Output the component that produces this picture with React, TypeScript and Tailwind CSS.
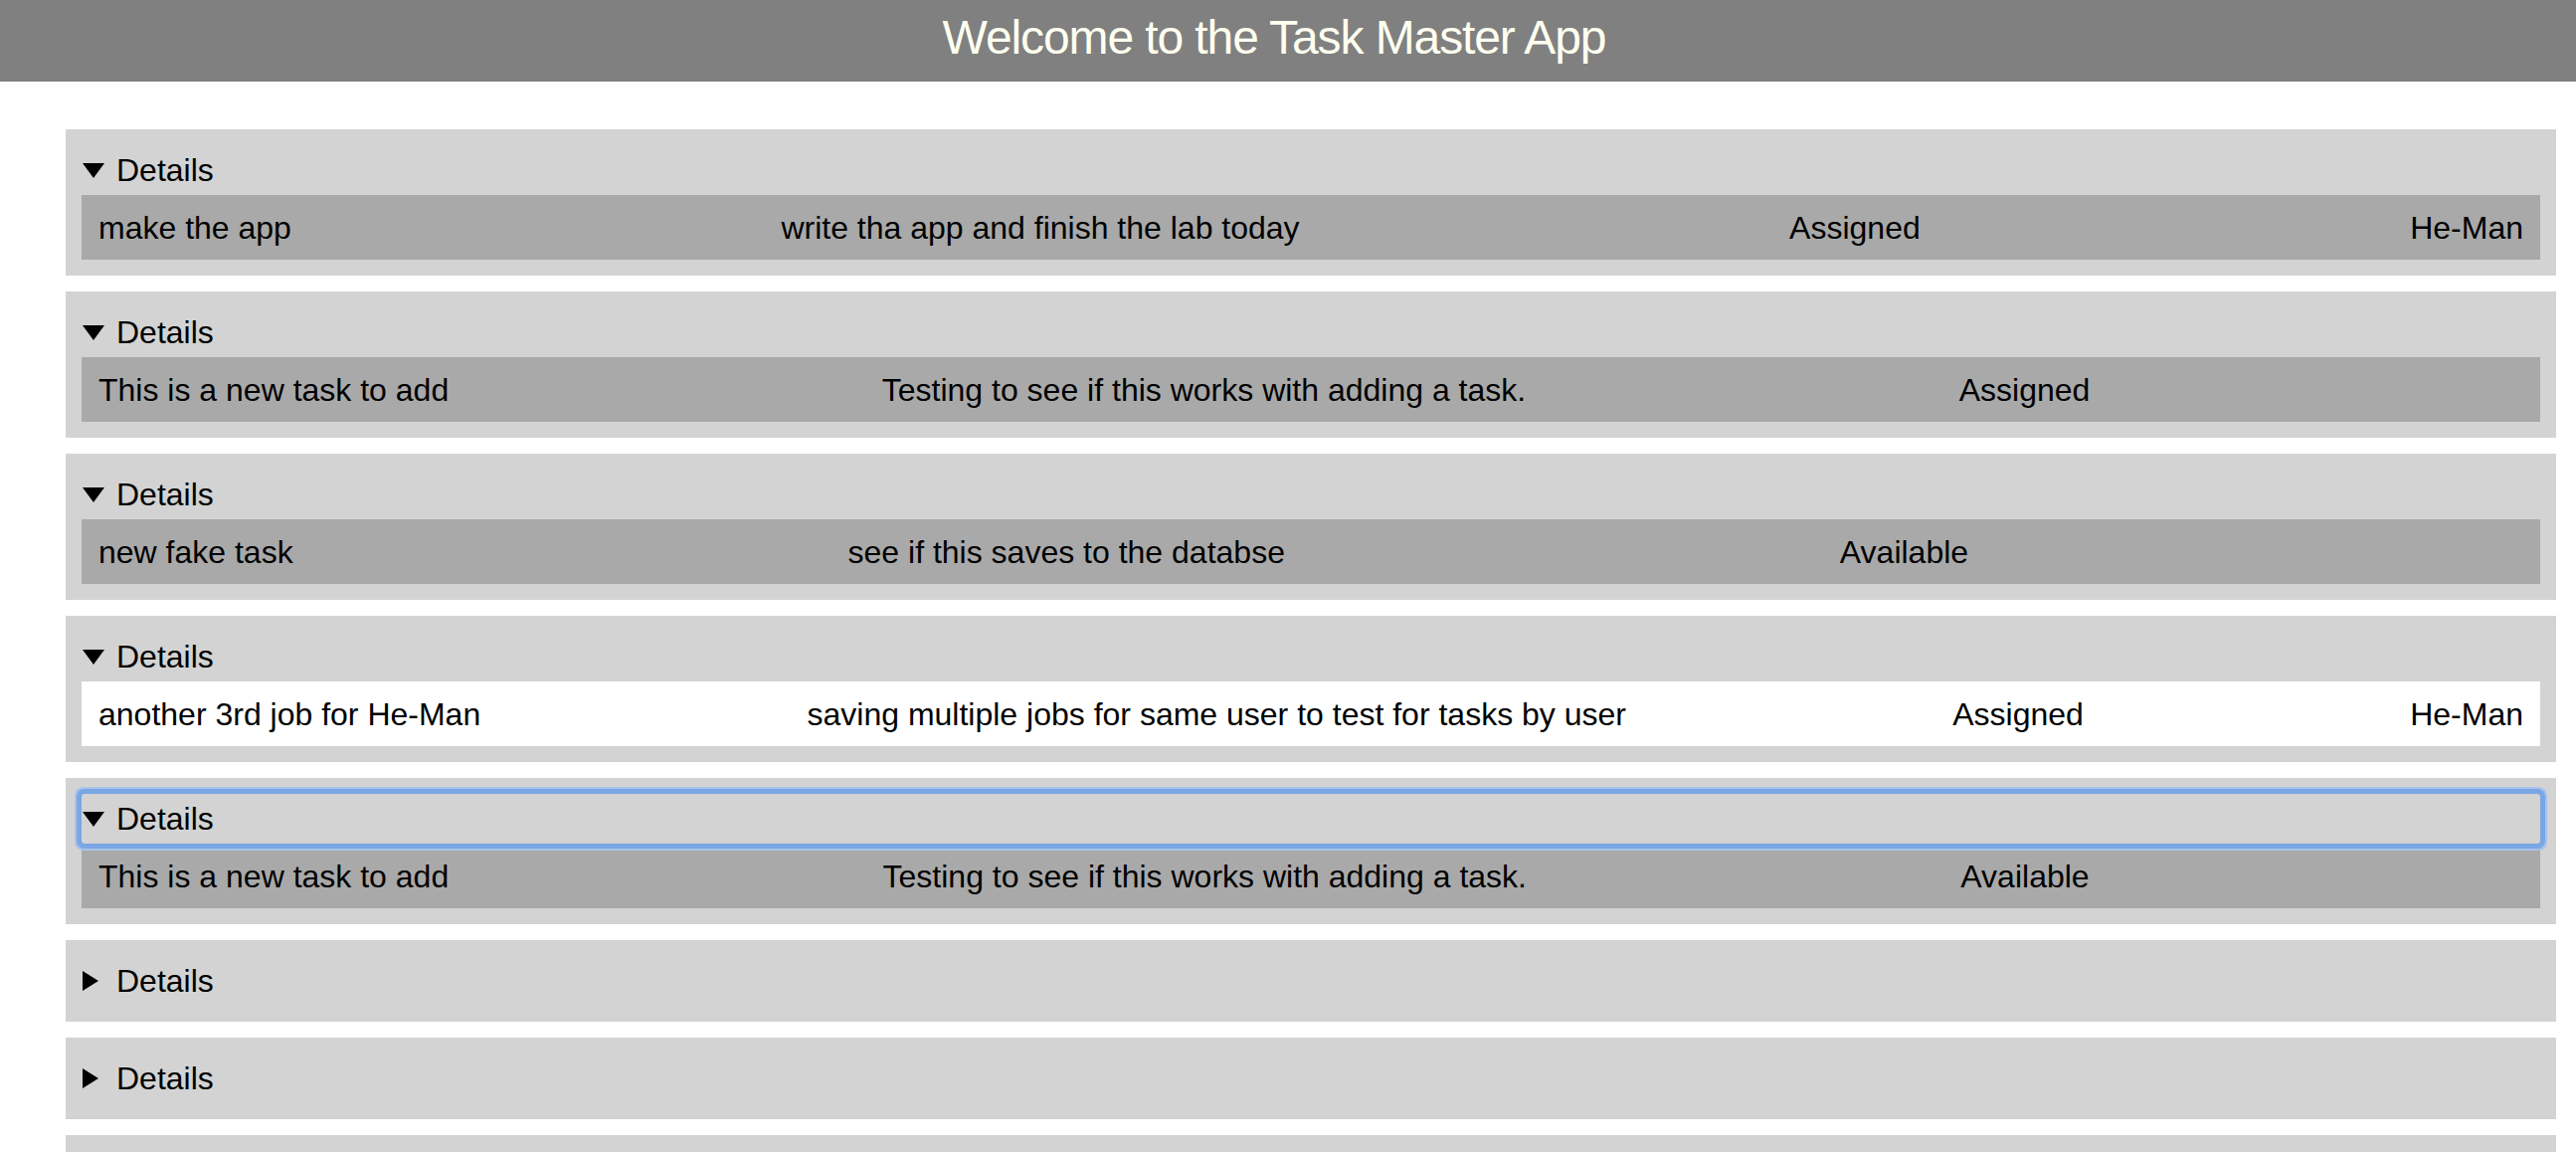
type Task = {
  title: string;
  description: string;
  status: string;
  assignee: string;
  white?: boolean;
  focused?: boolean;
};

const tasks: Task[] = [
  { title: "make the app", description: "write tha app and finish the lab today", status: "Assigned", assignee: "He-Man" },
  { title: "This is a new task to add", description: "Testing to see if this works with adding a task.", status: "Assigned", assignee: "" },
  { title: "new fake task", description: "see if this saves to the databse", status: "Available", assignee: "" },
  {
    title: "another 3rd job for He-Man",
    description: "saving multiple jobs for same user to test for tasks by user",
    status: "Assigned",
    assignee: "He-Man",
    white: true,
  },
  {
    title: "This is a new task to add",
    description: "Testing to see if this works with adding a task.",
    status: "Available",
    assignee: "",
    focused: true,
  },
];

function Marker({ open }: { open: boolean }) {
  return (
    <span className="flex w-[35px] shrink-0 items-center pl-[1px]">
      {open ? (
        <svg width="22" height="15" viewBox="0 0 22 15">
          <path d="M0 0 H22 L11 15 Z" fill="#000" />
        </svg>
      ) : (
        <svg width="16" height="20" viewBox="0 0 16 20">
          <path d="M0 0 L16 10 L0 20 Z" fill="#000" />
        </svg>
      )}
    </span>
  );
}

function Summary({ open, focused }: { open: boolean; focused?: boolean }) {
  return (
    <div
      className={
        focused
          ? "relative z-10 flex h-[50px] items-center rounded-[3px] shadow-[0_0_0_5px_#7aa6e4,0_0_0_7px_#a8c3ea]"
          : "flex h-[50px] items-center"
      }
    >
      <Marker open={open} />
      <span>Details</span>
    </div>
  );
}

function TaskCard({ task }: { task: Task }) {
  return (
    <div className="bg-[#d3d3d3] p-4">
      <Summary open focused={task.focused} />
      <div
        className={`flex h-[65px] items-center justify-between px-[17px] ${
          task.white ? "bg-white" : "bg-[#a9a9a9]"
        }`}
      >
        <span>{task.title}</span>
        <span>{task.description}</span>
        <span>{task.status}</span>
        <span>{task.assignee}</span>
      </div>
    </div>
  );
}

function ClosedCard() {
  return (
    <div className="bg-[#d3d3d3] p-4">
      <Summary open={false} />
    </div>
  );
}

export default function App() {
  return (
    <div className="min-h-screen bg-white font-['Liberation_Sans',Arial,sans-serif] text-[32px] leading-none text-black">
      <header className="flex h-[82px] items-center justify-center bg-[#808080] pb-[6px] pr-[28px]">
        <h1 className="text-[48px] tracking-[-1.1px] text-[#fffff0]">Welcome to the Task Master App</h1>
      </header>
      <div className="ml-[66px] mr-[20px] mt-[48px] flex flex-col gap-4">
        {tasks.map((t, i) => (
          <TaskCard key={i} task={t} />
        ))}
        <ClosedCard />
        <ClosedCard />
        <ClosedCard />
      </div>
    </div>
  );
}
